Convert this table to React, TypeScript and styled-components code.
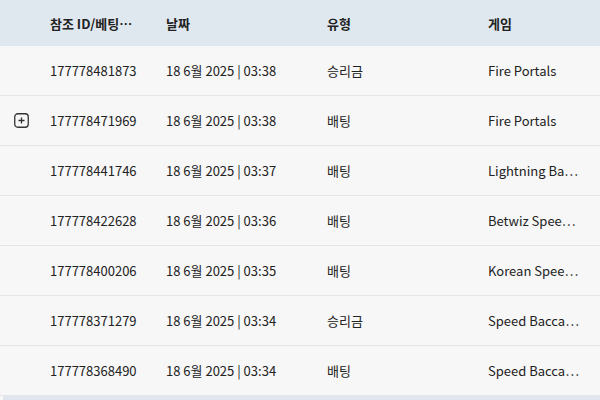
import React from "react";
import styled, { createGlobalStyle } from "styled-components";

const Global = createGlobalStyle`
  html, body { margin: 0; padding: 0; background: #f7f7f7; }
  body { font-family: "Noto Sans CJK KR", "Noto Sans", sans-serif; }
`;

const Table = styled.div`
  width: 600px;
  height: 400px;
  overflow: hidden;
  display: flex;
  flex-direction: column;
  background: #f7f7f7;
`;

const cols = "38px 116px 161px 161px 124px";

const HeaderRow = styled.div`
  display: grid;
  grid-template-columns: ${cols};
  height: 46px;
  align-items: center;
  background: #dfe7ef;
  flex-shrink: 0;
`;

const HeadCell = styled.div`
  padding: 0 12px;
  font-size: 13px;
  font-weight: 700;
  color: #222;
  white-space: nowrap;
`;

const Row = styled.div`
  display: grid;
  grid-template-columns: ${cols};
  height: 49px;
  align-items: center;
  border-bottom: 1px solid #e5e5e8;
  background: #f7f7f7;
  flex-shrink: 0;
`;

const Cell = styled.div`
  padding: 0 12px;
  font-size: 13px;
  color: #222;
  white-space: nowrap;
`;

const IconCell = styled.div`
  display: flex;
  align-items: center;
  justify-content: flex-start;
  padding-left: 14px;
`;

const ScrollBar = styled.div`
  height: 4px;
  margin-left: 3px;
  background: #e1e5ed;
  flex-shrink: 0;
`;

const PlusIcon = () => (
  <svg width="15" height="15" viewBox="0 0 15 15">
    <rect x="0.75" y="0.75" width="13.5" height="13.5" rx="3" fill="none" stroke="#333" strokeWidth="1.3" />
    <path d="M7.5 4.5v6M4.5 7.5h6" stroke="#333" strokeWidth="1.3" />
  </svg>
);

const rows = [
  { id: "177778481873", date: "18 6월 2025 | 03:38", type: "승리금", game: "Fire Portals", expand: false },
  { id: "177778471969", date: "18 6월 2025 | 03:38", type: "배팅", game: "Fire Portals", expand: true },
  { id: "177778441746", date: "18 6월 2025 | 03:37", type: "배팅", game: "Lightning Ba…", expand: false },
  { id: "177778422628", date: "18 6월 2025 | 03:36", type: "배팅", game: "Betwiz Spee…", expand: false },
  { id: "177778400206", date: "18 6월 2025 | 03:35", type: "배팅", game: "Korean Spee…", expand: false },
  { id: "177778371279", date: "18 6월 2025 | 03:34", type: "승리금", game: "Speed Bacca…", expand: false },
  { id: "177778368490", date: "18 6월 2025 | 03:34", type: "배팅", game: "Speed Bacca…", expand: false },
];

export default function App() {
  return (
    <>
      <Global />
      <Table>
        <HeaderRow>
          <div />
          <HeadCell>참조 ID/베팅…</HeadCell>
          <HeadCell>날짜</HeadCell>
          <HeadCell>유형</HeadCell>
          <HeadCell>게임</HeadCell>
        </HeaderRow>
        {rows.map((r) => (
          <Row key={r.id}>
            <IconCell>{r.expand ? <PlusIcon /> : null}</IconCell>
            <Cell>{r.id}</Cell>
            <Cell>{r.date}</Cell>
            <Cell>{r.type}</Cell>
            <Cell>{r.game}</Cell>
          </Row>
        ))}
        <ScrollBar />
      </Table>
    </>
  );
}
